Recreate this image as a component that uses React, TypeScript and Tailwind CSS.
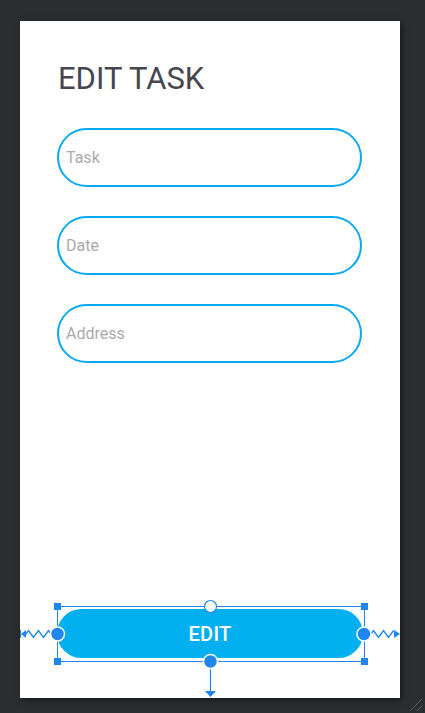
import { useState } from "react"

const fields = ["Task", "Date", "Address"]

function Zigzag({ from, to, y }: { from: number; to: number; y: number }) {
  const pts: string[] = []
  const step = from < to ? 2.5 : -2.5
  let i = 0
  for (let x = from; step > 0 ? x <= to : x >= to; x += step) {
    pts.push(`${x},${i % 2 === 0 ? y : i % 4 === 1 ? y - 3.5 : y + 3.5}`)
    i++
  }
  return <polyline points={pts.join(" ")} fill="none" stroke="#1f86f0" strokeWidth="1.3" />
}

function SelectionOverlay() {
  const blue = "#1f86f0"
  return (
    <svg
      className="absolute left-[-37px] top-[-11px] pointer-events-none"
      width="380"
      height="100"
      viewBox="20 598 380 100"
    >
      {/* bounds */}
      <rect x="57.5" y="606.5" width="307" height="55" fill="none" stroke={blue} strokeWidth="1" />
      {[
        [57.5, 606.5],
        [364.5, 606.5],
        [57.5, 661.5],
        [364.5, 661.5],
      ].map(([x, y]) => (
        <rect key={`${x}-${y}`} x={x - 3.5} y={y - 3.5} width="7" height="7" fill={blue} />
      ))}

      {/* springs */}
      <Zigzag from={51} to={26} y={634} />
      <polygon points="21,634 26,630 26,638" fill={blue} />
      <line x1="20.5" y1="630" x2="20.5" y2="638" stroke={blue} strokeWidth="1.2" />
      <Zigzag from={371} to={394} y={634} />
      <polygon points="400,634 394,630 394,638" fill={blue} />

      {/* bottom arrow */}
      <line x1="210.5" y1="667" x2="210.5" y2="692" stroke={blue} strokeWidth="1.2" />
      <polygon points="205,691 216,691 210.5,697" fill={blue} />

      {/* anchors */}
      <circle cx="210.5" cy="606.5" r="6" fill="white" stroke={blue} strokeWidth="1.2" />
      <circle cx="210.5" cy="661.5" r="7" fill={blue} stroke="white" strokeWidth="1.5" />
      <circle cx="57.5" cy="634" r="7" fill={blue} stroke="white" strokeWidth="1.5" />
      <circle cx="364" cy="634" r="7" fill={blue} stroke="white" strokeWidth="1.5" />
    </svg>
  )
}

export default function App() {
  const [values, setValues] = useState<Record<string, string>>({ Task: "", Date: "", Address: "" })

  return (
    <div className="relative w-[425px] h-[713px] bg-[#2b2d30] pt-[21px] pl-[20px] font-['Roboto',_'Liberation_Sans',_sans-serif] overflow-hidden">
      <div className="w-[380px] h-[677px] bg-white flex flex-col px-[37px] shadow-[2px_2px_6px_rgba(0,0,0,0.5)]">
        <h1 className="mt-[40px] text-[31px] leading-[36px] font-normal text-[#47464f] pl-[1px]">EDIT TASK</h1>

        <div className="flex flex-col gap-[29px] mt-[31px]">
          {fields.map((f) => (
            <input
              key={f}
              type="text"
              placeholder={f}
              value={values[f]}
              onChange={(e) => setValues({ ...values, [f]: e.target.value })}
              className="w-[305px] h-[59px] rounded-full border-2 border-[#0aaaf0] px-[7px] text-[16px] text-[#333] placeholder:text-[#ababab] outline-none"
            />
          ))}
        </div>

        <div className="relative mt-auto mb-[40px]">
          <button
            type="button"
            className="w-[306px] h-[49px] rounded-full bg-[#03b0ef] text-white text-[20px] font-medium tracking-[0.3px]"
          >
            EDIT
          </button>
          <SelectionOverlay />
        </div>
      </div>

      {/* window resize grip */}
      <svg className="absolute right-[2px] bottom-[1px]" width="16" height="16" viewBox="0 0 16 16">
        <line x1="3" y1="15" x2="15" y2="3" stroke="#55575b" strokeWidth="1" />
        <line x1="10" y1="15" x2="15" y2="10" stroke="#55575b" strokeWidth="1" />
      </svg>
    </div>
  )
}
